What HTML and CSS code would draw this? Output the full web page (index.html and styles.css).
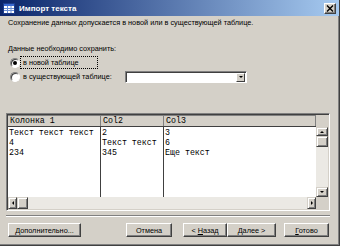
FILE: index.html
```html
<!DOCTYPE html>
<html lang="ru">
<head>
<meta charset="UTF-8">
<title>Импорт текста</title>
<link rel="stylesheet" href="styles.css">
</head>
<body>

<div class="window">
    <!-- TITLE BAR -->
    <div class="titlebar">
        <svg class="title-icon" width="12" height="11" viewBox="0 0 12 11">
            <rect x="0.5" y="0.5" width="11" height="10" fill="#fff" stroke="#1c3c8c"/>
            <rect x="1" y="1" width="10" height="2" fill="#3a6ad0"/>
            <path d="M1 5.5h10M1 7.5h10M4.5 3v7M8 3v7" stroke="#6b8fd6" stroke-width="1"/>
        </svg>
        <span class="title-text">Импорт текста</span>
        <span class="close-btn">
            <svg width="8" height="7" viewBox="0 0 8 7">
                <path d="M1 0.5l6 6M7 0.5l-6 6" stroke="#000" stroke-width="1.4"/>
            </svg>
        </span>
    </div>

    <div class="content">
        <p class="intro">Сохранение данных допускается в новой или в существующей таблице.</p>
        <p class="label">Данные необходимо сохранить:</p>

        <div class="radio-row">
            <span class="radio checked"></span>
            <span class="radio-label focused">в новой таблице</span>
        </div>
        <div class="radio-row">
            <span class="radio"></span>
            <span class="radio-label wide">в существующей таблице:</span>
            <div class="combo">
                <span class="combo-btn"><span class="arrow-down"></span></span>
            </div>
        </div>

        <!-- PREVIEW GRID -->
        <div class="grid">
            <div class="table">
                <div class="thead">
                    <span class="cell c1">Колонка 1</span>
                    <span class="cell c2">Col2</span>
                    <span class="cell c3">Col3</span>
                </div>
                <div class="tbody">
                    <div class="col c1">
                        <span>Текст текст текст</span>
                        <span>4</span>
                        <span>234</span>
                    </div>
                    <div class="col c2">
                        <span>2</span>
                        <span>Текст текст</span>
                        <span>345</span>
                    </div>
                    <div class="col c3">
                        <span>3</span>
                        <span>6</span>
                        <span>Еще текст</span>
                    </div>
                </div>
            </div>
            <div class="vscroll">
                <div class="vscroll-top"></div>
                <span class="sbtn"><span class="arrow-up"></span></span>
                <span class="thumb-v"></span>
                <span class="track"></span>
                <span class="sbtn down"><span class="arrow-down"></span></span>
            </div>
            <div class="hscroll">
                <span class="sbtn side"><span class="arrow-left"></span></span>
                <span class="thumb-h"></span>
                <span class="track"></span>
                <span class="sbtn side"><span class="arrow-right"></span></span>
            </div>
            <div class="corner"></div>
        </div>

        <div class="separator"></div>

        <div class="buttons">
            <button class="btn btn-more">Дополнительно...</button>
            <button class="btn btn-cancel">Отмена</button>
            <button class="btn btn-back">&lt; <u>Н</u>азад</button>
            <button class="btn btn-next"><u>Д</u>алее &gt;</button>
            <button class="btn btn-done"><u>Г</u>отово</button>
        </div>
    </div>
</div>

</body>
</html>
```

FILE: styles.css
```css
body {
    margin: 0;
    font-family: 'Liberation Sans', Arial, sans-serif;
    font-size: 7.3px;
    color: #000;
}

.window {
    width: 340px;
    height: 246px;
    box-sizing: border-box;
    background: #d4d0c8;
    border-right: 1px solid #404040;
    border-bottom: 1px solid #404040;
    box-shadow: inset -1px -1px #808080;
}

/* TITLE BAR */
.titlebar {
    height: 16px;
    display: flex;
    align-items: center;
    gap: 4px;
    padding: 0 3px 0 3px;
    background: linear-gradient(to right, #0a246a, #a6caf0);
    color: #fff;
    font-size: 8px;
    font-weight: bold;
}

.title-icon {
    display: block;
}

.close-btn {
    margin-left: auto;
    width: 10px;
    height: 9px;
    display: flex;
    align-items: center;
    justify-content: center;
    background: #d4d0c8;
    border: 1px solid;
    border-color: #fff #404040 #404040 #fff;
    box-shadow: inset -1px -1px #808080;
}

.content {
    padding: 0 8px;
}

.intro {
    margin: 1px 0 0 0;
    line-height: 12px;
}

.label {
    margin: 14px 0 0 0;
    line-height: 12px;
}

/* RADIO BUTTONS */
.radio-row {
    height: 13px;
    display: flex;
    align-items: center;
    margin-top: 1px;
}

.radio {
    width: 8px;
    height: 8px;
    margin-left: 2px;
    border-radius: 50%;
    border: 1px solid;
    border-color: #808080 #fff #fff #808080;
    background: #fff;
    box-shadow: inset 1px 1px #404040;
    display: flex;
    align-items: center;
    justify-content: center;
}

.radio.checked::after {
    content: "";
    width: 4px;
    height: 4px;
    border-radius: 50%;
    background: #000;
}

.radio-label {
    margin-left: 0;
    padding: 0 2px;
    line-height: 11px;
    border: 1px solid transparent;
}

.radio-label.focused {
    border: 1px dotted #000;
    width: 72px;
}

.radio-label.wide {
    width: 99px;
}

.combo {
    width: 122px;
    height: 12px;
    box-sizing: border-box;
    background: #fff;
    border: 1px solid;
    border-color: #808080 #fff #fff #808080;
    box-shadow: inset 1px 1px #404040;
    display: flex;
    justify-content: flex-end;
    padding: 1px 1px 0 0;
}

.combo-btn {
    width: 9px;
    height: 9px;
    box-sizing: border-box;
    background: #d4d0c8;
    border: 1px solid;
    border-color: #fff #404040 #404040 #fff;
    display: flex;
    align-items: center;
    justify-content: center;
}

/* PREVIEW GRID */
.grid {
    margin: 30px 0 0 -2px;
    width: 324px;
    height: 98px;
    box-sizing: border-box;
    border: 1px solid;
    border-color: #808080 #fff #fff #808080;
    box-shadow: inset 1px 1px #404040, inset -1px -1px #d4d0c8;
    padding: 1px;
    display: grid;
    grid-template-columns: 308px 12px;
    grid-template-rows: 82px 12px;
}

.table {
    background: #fff;
    font-family: 'Liberation Mono', 'Courier New', monospace;
    font-size: 8.3px;
    display: flex;
    flex-direction: column;
    overflow: hidden;
}

.thead {
    height: 12px;
    box-sizing: border-box;
    display: flex;
    background: #d4d0c8;
    border-top: 1px solid #808080;
    border-bottom: 1px solid #404040;
}

.thead .cell {
    line-height: 10px;
    padding-left: 2px;
    box-sizing: border-box;
    border-right: 1px solid #808080;
}

.c1 { width: 93px; }
.c2 { width: 63px; }
.c3 { flex: 1; }

.tbody {
    flex: 1;
    display: flex;
}

.col {
    box-sizing: border-box;
    display: flex;
    flex-direction: column;
    padding: 1px 0 0 1px;
    border-right: 1px solid #404040;
    white-space: nowrap;
}

.col span {
    line-height: 10px;
}

.col.c3 {
    border-right: none;
}

/* SCROLLBARS */
.vscroll {
    display: flex;
    flex-direction: column;
    background: #d4d0c8;
}

.vscroll-top {
    height: 12px;
}

.sbtn {
    width: 12px;
    height: 9px;
    box-sizing: border-box;
    background: #d4d0c8;
    border: 1px solid;
    border-color: #d4d0c8 #404040 #404040 #d4d0c8;
    box-shadow: inset 1px 1px #fff, inset -1px -1px #808080;
    display: flex;
    align-items: center;
    justify-content: center;
}

.sbtn.down {
    height: 10px;
}

.sbtn.side {
    width: 9px;
    height: 12px;
}

.track {
    flex: 1;
    background: #ebe9e4;
}

.thumb-v {
    width: 12px;
    height: 11px;
    box-sizing: border-box;
    background: #d4d0c8;
    border: 1px solid;
    border-color: #d4d0c8 #404040 #404040 #d4d0c8;
    box-shadow: inset 1px 1px #fff, inset -1px -1px #808080;
}

.hscroll {
    display: flex;
}

.thumb-h {
    width: 11px;
    height: 12px;
    box-sizing: border-box;
    background: #d4d0c8;
    border: 1px solid;
    border-color: #d4d0c8 #404040 #404040 #d4d0c8;
    box-shadow: inset 1px 1px #fff, inset -1px -1px #808080;
}

.corner {
    background: #d4d0c8;
}

.arrow-up, .arrow-down, .arrow-left, .arrow-right {
    width: 0;
    height: 0;
    border: 2px solid transparent;
}

.arrow-up { border-bottom: 2px solid #000; border-top-width: 0; }
.arrow-down { border-top: 2px solid #000; border-bottom-width: 0; }
.arrow-left { border-right: 2px solid #000; border-left-width: 0; }
.arrow-right { border-left: 2px solid #000; border-right-width: 0; }

.separator {
    margin-top: 4px;
    margin-left: -2px;
    width: 324px;
    height: 1px;
    background: #808080;
    border-bottom: 1px solid #fff;
}

/* BUTTONS */
.buttons {
    display: flex;
    margin-top: 6px;
}

.btn {
    height: 14px;
    padding: 0;
    font-family: 'Liberation Sans', Arial, sans-serif;
    font-size: 7.3px;
    color: #000;
    background: #d4d0c8;
    border: 1px solid;
    border-color: #fff #404040 #404040 #fff;
    box-shadow: inset -1px -1px #808080;
}

.btn-more { width: 73px; }
.btn-cancel { width: 46px; margin-left: 45px; }
.btn-back { width: 44px; margin-left: 11px; }
.btn-next { width: 49px; }
.btn-done { width: 45px; margin-left: 8px; }
```
